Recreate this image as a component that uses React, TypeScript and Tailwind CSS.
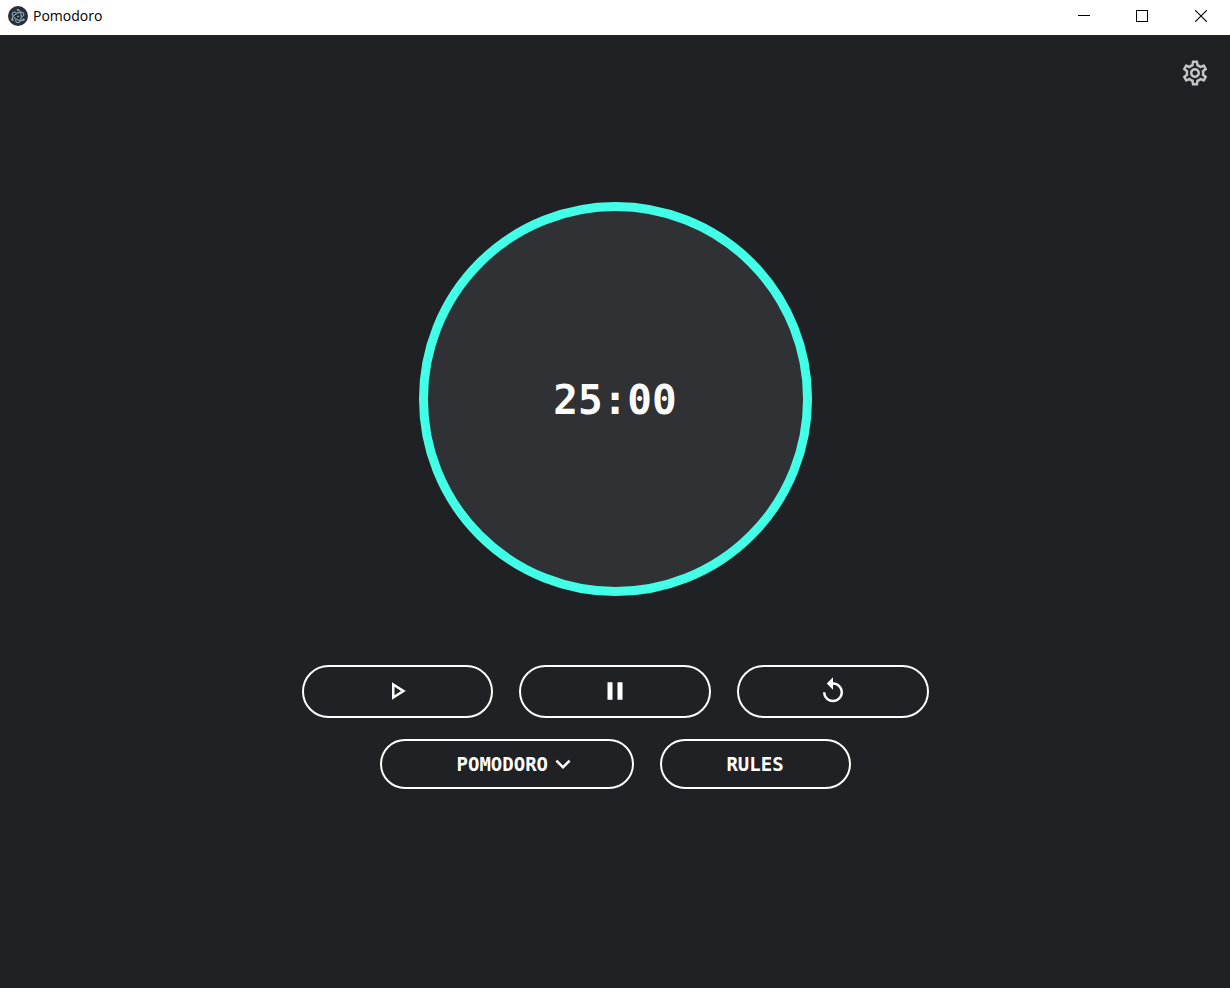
import { useEffect, useState } from "react";
import {
  MdKeyboardArrowDown,
  MdOutlinePlayArrow,
  MdOutlineSettings,
  MdPause,
  MdReplay,
} from "react-icons/md";
import { SiElectron } from "react-icons/si";

const MODES = [
  { id: "pomodoro", label: "POMODORO", seconds: 1500 },
  { id: "short", label: "SHORT", seconds: 300 },
  { id: "long", label: "LONG", seconds: 900 },
];

const pill =
  "flex cursor-pointer items-center justify-center rounded-full border-2 border-white text-white";

function TitleBar() {
  const control = "flex h-8 w-[58px] items-center justify-center";
  return (
    <header className="flex h-[35px] shrink-0 items-start justify-between bg-white text-black">
      <div className="flex h-8 items-center gap-[5px] pl-2">
        <span className="flex size-5 items-center justify-center rounded-full bg-[#2b2e3a] text-[#9fd3de]">
          <SiElectron className="size-3.5 stroke-current [stroke-width:0.7]" aria-hidden="true" />
        </span>
        <h1 className="font-['Open_Sans',sans-serif] text-[14px] leading-5 font-normal">Pomodoro</h1>
      </div>
      <div className="flex">
        <button type="button" aria-label="Minimize" className={control}>
          <svg viewBox="0 0 12 12" className="size-3" stroke="currentColor" fill="none" shapeRendering="crispEdges">
            <path d="M0 5.5h12" />
          </svg>
        </button>
        <button type="button" aria-label="Maximize" className={control}>
          <svg viewBox="0 0 12 12" className="size-3" stroke="currentColor" fill="none" shapeRendering="crispEdges">
            <rect x="0.5" y="0.5" width="11" height="11" />
          </svg>
        </button>
        <button type="button" aria-label="Close" className={`${control} ml-px`}>
          <svg viewBox="0 0 12 12" className="size-3" stroke="currentColor" strokeWidth="1.1" fill="none">
            <path d="M0 0l12 12M12 0L0 12" />
          </svg>
        </button>
      </div>
    </header>
  );
}

function formatTime(total: number) {
  const minutes = String(Math.floor(total / 60)).padStart(2, "0");
  const seconds = String(total % 60).padStart(2, "0");
  return `${minutes}:${seconds}`;
}

export default function App() {
  const [mode, setMode] = useState(MODES[0]);
  const [left, setLeft] = useState(MODES[0].seconds);
  const [running, setRunning] = useState(false);

  useEffect(() => {
    if (!running) return;
    const timer = setInterval(() => setLeft((value) => Math.max(0, value - 1)), 1000);
    return () => clearInterval(timer);
  }, [running]);

  const reset = (next = mode) => {
    setRunning(false);
    setMode(next);
    setLeft(next.seconds);
  };

  return (
    <div className="flex min-h-screen flex-col bg-[#202124] font-['DejaVu_Sans_Mono',monospace] font-bold">
      <TitleBar />
      <div className="flex justify-end px-5 pt-[23px]">
        <button type="button" aria-label="Settings" className="cursor-pointer text-[#c4c4c4]">
          <MdOutlineSettings className="size-[30px]" />
        </button>
      </div>
      <main className="flex flex-col items-center px-4 pt-[114px] pb-8">
        <div
          role="timer"
          className="flex h-[394px] w-[393px] items-center justify-center rounded-full border-[9px] border-[#42ffe8] bg-[#303134] pt-[3px] text-[41px] leading-none text-white"
        >
          {formatTime(left)}
        </div>
        <div className="mt-[69px] grid w-full max-w-[627px] grid-cols-3 gap-[26px]">
          <button type="button" aria-label="Start" onClick={() => setRunning(true)} className={`${pill} h-[53px] pb-px`}>
            <MdOutlinePlayArrow className="size-[30px]" />
          </button>
          <button type="button" aria-label="Pause" onClick={() => setRunning(false)} className={`${pill} h-[53px] pb-px`}>
            <MdPause className="size-[30px]" />
          </button>
          <button type="button" aria-label="Reset" onClick={() => reset()} className={`${pill} h-[53px] pb-px`}>
            <MdReplay className="size-[30px]" />
          </button>
        </div>
        <div className="mt-[21px] flex flex-wrap justify-center gap-[26px] text-[19px] leading-6">
          <div className="relative">
            <select
              aria-label="Mode"
              value={mode.id}
              onChange={(event) => reset(MODES.find((item) => item.id === event.target.value))}
              className="h-[50px] w-[254px] cursor-pointer appearance-none rounded-full border-2 border-white bg-transparent pl-[75px] text-white outline-none"
            >
              {MODES.map((item) => (
                <option key={item.id} value={item.id} className="bg-[#303134]">
                  {item.label}
                </option>
              ))}
            </select>
            <MdKeyboardArrowDown className="pointer-events-none absolute top-2.5 right-14 size-[30px] text-white" />
          </div>
          <button type="button" className={`${pill} h-[50px] w-[191px]`}>
            RULES
          </button>
        </div>
      </main>
    </div>
  );
}
